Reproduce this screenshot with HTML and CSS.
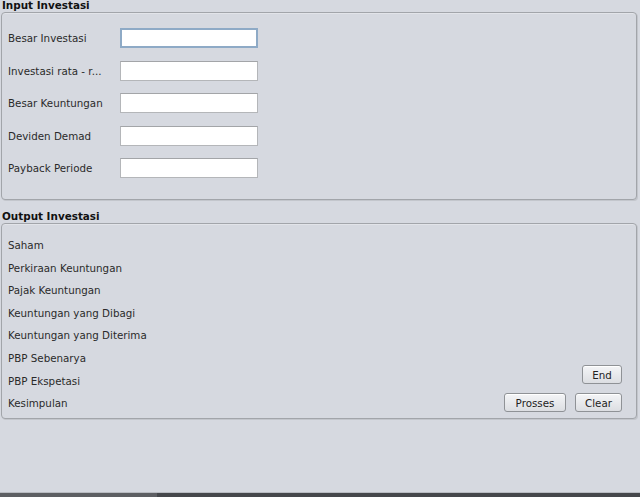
FILE: index.html
```html
<!DOCTYPE html>
<html>
<head>
<meta charset="utf-8">
<link rel="stylesheet" href="styles.css">
</head>
<body>
<div class="app">
  <div class="section-title">Input Investasi</div>
  <div class="panel input-panel">
    <div class="form-row"><label>Besar Investasi</label><input class="field focused" type="text"></div>
    <div class="form-row"><label>Investasi rata - r...</label><input class="field" type="text"></div>
    <div class="form-row"><label>Besar Keuntungan</label><input class="field" type="text"></div>
    <div class="form-row"><label>Deviden Demad</label><input class="field" type="text"></div>
    <div class="form-row"><label>Payback Periode</label><input class="field" type="text"></div>
  </div>
  <div class="section-title second">Output Investasi</div>
  <div class="panel output-panel">
    <ul class="out-list">
      <li>Saham</li>
      <li>Perkiraan Keuntungan</li>
      <li>Pajak Keuntungan</li>
      <li>Keuntungan yang Dibagi</li>
      <li>Keuntungan yang Diterima</li>
      <li>PBP Sebenarya</li>
      <li>PBP Ekspetasi</li>
      <li>Kesimpulan</li>
    </ul>
    <div class="actions">
      <button class="btn btn-end">End</button>
      <div class="btn-row">
        <button class="btn btn-proc">Prosses</button>
        <button class="btn btn-clear">Clear</button>
      </div>
    </div>
  </div>
  <div class="spacer"></div>
  <div class="taskbar"><div class="task-left"></div><div class="task-right"></div></div>
</div>
</body>
</html>
```
FILE: styles.css
```css
html, body {
  margin: 0;
  padding: 0;
}
body {
  background: #d6d9e0;
  font-family: "DejaVu Sans", "Liberation Sans", sans-serif;
  font-size: 10.3px;
  color: #2a2a2a;
}
.app {
  height: 497px;
  display: flex;
  flex-direction: column;
}
.section-title {
  font-weight: bold;
  font-size: 10.4px;
  line-height: 11px;
  height: 12px;
  padding-left: 2px;
  color: #111;
}
.section-title.second {
  margin-top: 10px;
  height: 13px;
  line-height: 13px;
}
.panel {
  margin: 0 3px 0 1px;
  border: 1px solid #a2a5aa;
  border-radius: 4px;
  box-shadow: 1px 1px 0 #c3c6cc, inset 0 1px 0 #e2e4e9;
  background: #d6d9e0;
}
.input-panel {
  height: 188px;
  box-sizing: border-box;
  padding: 15px 0 0 6px;
  display: flex;
  flex-direction: column;
  gap: 12.5px;
}
.form-row {
  display: flex;
  align-items: center;
  height: 20px;
}
.form-row label {
  width: 112px;
  flex: none;
}
.field {
  box-sizing: border-box;
  width: 138px;
  height: 20px;
  margin: 0;
  padding: 0 3px;
  background: #fff;
  border: 1px solid #b4b6b9;
  border-top-color: #a3a5a8;
  outline: none;
  font: inherit;
}
.field.focused {
  border: 2px solid #8eaac6;
}
.output-panel {
  height: 196px;
  box-sizing: border-box;
  padding: 10px 14px 6px 6px;
  display: flex;
  justify-content: space-between;
}
.out-list {
  list-style: none;
  margin: 0;
  padding: 0;
}
.out-list li {
  height: 22.6px;
  line-height: 22.6px;
}
.actions {
  display: flex;
  flex-direction: column;
  align-items: flex-end;
  justify-content: flex-end;
  gap: 9px;
}
.btn-row {
  display: flex;
  gap: 9px;
}
.btn {
  box-sizing: border-box;
  height: 19px;
  padding: 0;
  margin: 0;
  font: inherit;
  color: #222;
  border: 1px solid #8f9296;
  border-radius: 3px;
  background: linear-gradient(#f4f5f7, #dcdee2);
  box-shadow: inset 0 1px 0 #fff;
}
.btn-end { width: 40px; }
.btn-proc { width: 62px; }
.btn-clear { width: 47px; }
.spacer {
  flex: 1;
}
.taskbar {
  height: 4px;
  display: flex;
  border-top: 1px solid #b9bcc2;
}
.task-left {
  width: 157px;
  background: #5d5f63;
}
.task-right {
  flex: 1;
  background: #45474b;
}
```
